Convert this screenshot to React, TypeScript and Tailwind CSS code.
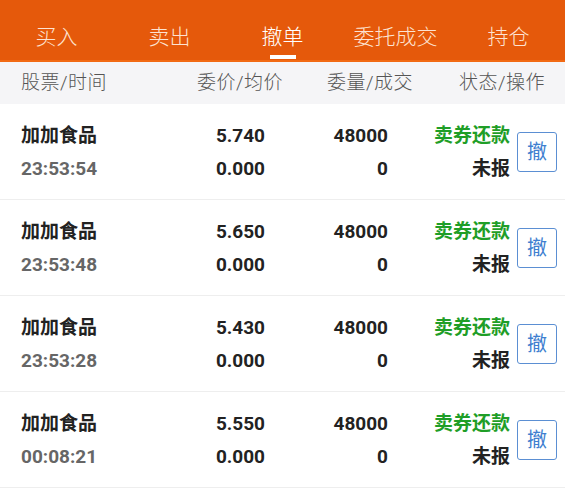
import React from "react";

const tabs = ["买入", "卖出", "撤单", "委托成交", "持仓"];
const rows = [
  { name: "加加食品", time: "23:53:54", price: "5.740", avg: "0.000", vol: "48000", done: "0" },
  { name: "加加食品", time: "23:53:48", price: "5.650", avg: "0.000", vol: "48000", done: "0" },
  { name: "加加食品", time: "23:53:28", price: "5.430", avg: "0.000", vol: "48000", done: "0" },
  { name: "加加食品", time: "00:08:21", price: "5.550", avg: "0.000", vol: "48000", done: "0" },
];

export default function App() {
  return (
    <div
      className="w-[565px] h-[500px] bg-white overflow-hidden"
      style={{ fontFamily: "Roboto, 'Noto Sans CJK SC', sans-serif" }}
    >
      <div className="h-[62px] bg-[#e5590b] border-b-[2px] border-[#f26a14] flex">
        {tabs.map((t, i) => (
          <div key={t} className="flex-1 flex flex-col items-center pt-[22px]">
            <span
              className={
                "text-[21px] leading-[30px] font-light " +
                (i === 2 ? "text-white" : "text-[#fde3d2]")
              }
            >
              {t}
            </span>
            {i === 2 && <div className="mt-[3px] w-[26px] h-[4px] bg-white" />}
          </div>
        ))}
      </div>
      <div className="h-[42px] bg-[#f5f5f7] flex items-center text-[19px] tracking-[0.5px] text-[#555] font-light">
        <div className="pl-[21px] w-[197px]">股票/时间</div>
        <div className="w-[130px]">委价/均价</div>
        <div className="w-[132px]">委量/成交</div>
        <div>状态/操作</div>
      </div>
      {rows.map((r, i) => (
        <div key={i} className="h-[96px] border-b border-[#eeeeee] flex items-center pl-[21px] font-bold text-[19px] text-[#222]">
          <div className="w-[150px] leading-[33px] pt-[1px]">
            <div>{r.name}</div>
            <div className="text-[#666]">{r.time}</div>
          </div>
          <div className="w-[94px] text-right leading-[33px] pt-[1px]">
            <div>{r.price}</div>
            <div>{r.avg}</div>
          </div>
          <div className="w-[123px] text-right leading-[33px] pt-[1px]">
            <div>{r.vol}</div>
            <div>{r.done}</div>
          </div>
          <div className="w-[122px] text-right leading-[33px] pt-[1px]">
            <div className="text-[#1f9e27]">卖券还款</div>
            <div>未报</div>
          </div>
          <div className="ml-[7px] w-[40px] h-[40px] border border-[#5b8fd3] rounded-[3px] flex items-center justify-center text-[#3f7fd0] font-normal text-[20px]">
            撤
          </div>
        </div>
      ))}
    </div>
  );
}
